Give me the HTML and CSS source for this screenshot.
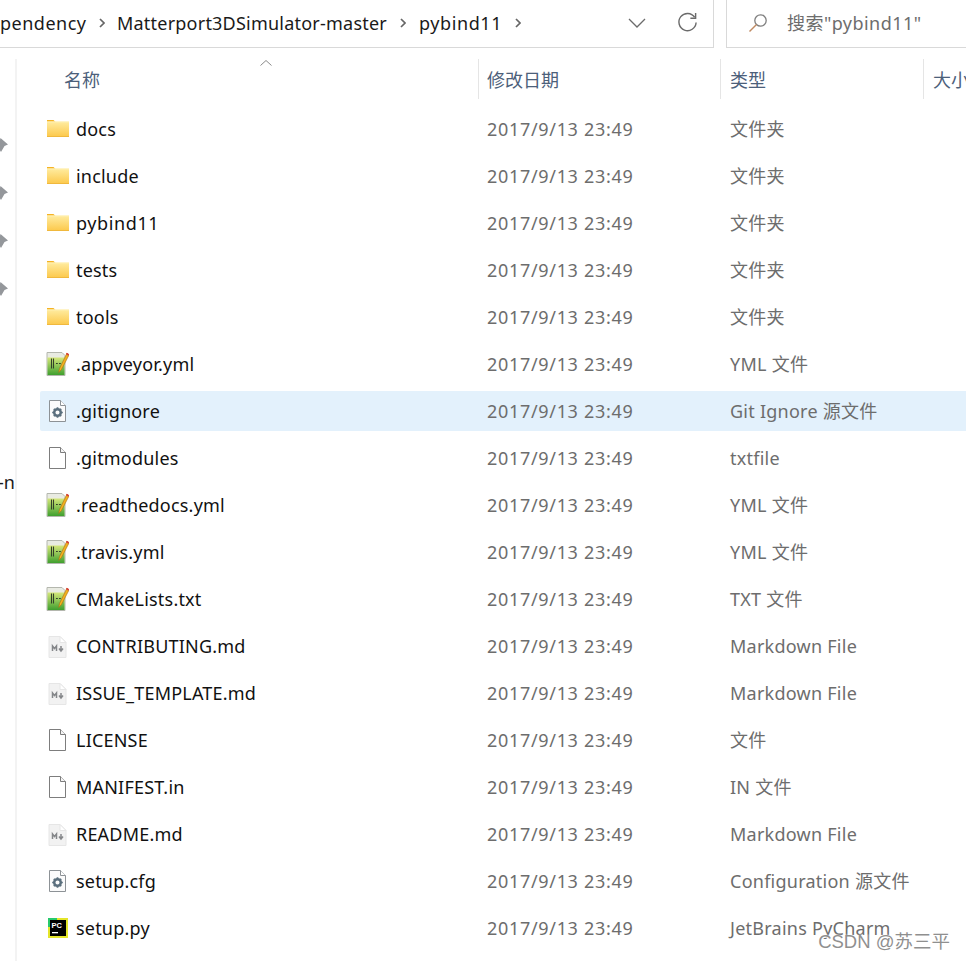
FILE: index.html
```html
<!DOCTYPE html>
<html lang="zh-CN">
<head>
<meta charset="utf-8">
<title>pybind11</title>
<link rel="stylesheet" href="styles.css">
</head>
<body>
<svg class="defs" width="0" height="0" aria-hidden="true">
  <defs>
    <linearGradient id="fg" x1="0" y1="0" x2="0" y2="1"><stop offset="0" stop-color="#ffeca0"/><stop offset="1" stop-color="#fcc84a"/></linearGradient>
    <linearGradient id="gg" x1="0" y1="0" x2="0" y2="1"><stop offset="0" stop-color="#d5e77a"/><stop offset="1" stop-color="#3f9f2e"/></linearGradient>
    <symbol id="folder" viewBox="0 0 24 24">
      <path d="M2 3h6.500l2 2h-8.500z" fill="#f5b324"/>
      <rect x="2" y="4.500" width="22" height="15.500" fill="url(#fg)"/>
      <path d="M2 4.500h22v.8h-22z" fill="#fff3c0"/>
      <path d="M2 19.400h22v.6h-22z" fill="#e8ae35"/>
    </symbol>
    <symbol id="yml" viewBox="0 0 24 24">
      <path d="M2 .5h15l3 3v20h-18z" fill="#e9ebe2" stroke="#b4b7ae"/>
      <rect x="2.500" y="5.500" width="17" height="17.500" fill="url(#gg)"/>
      <path d="M6.500 6.500v10M8.500 6.500v10M11 11.500h1.800M14 11.500h1.800" stroke="#33412a" stroke-width="1.100"/>
      <path d="M22 1 14.500 16.500l-.8 4 2.800-3L24 3z" fill="#f2b01e" stroke="#a66f1a" stroke-width=".6"/>
      <path d="M21.700 .8l2.500 1.400-.8 1.500-2.500-1.400z" fill="#d8433a"/>
    </symbol>
    <symbol id="gear" viewBox="0 0 24 24">
      <path d="M4.500 1.500h11l5 5v16h-16z" fill="#fbfbfb" stroke="#8d9296"/>
      <path d="M15.500 1.500v5h5" fill="#fff" stroke="#8d9296"/>
      <circle cx="12.500" cy="13.500" r="3.300" fill="none" stroke="#5b6f7d" stroke-width="2.500"/>
      <path d="M12.500 8.200v2M12.500 16.800v2M7.200 13.500h2M15.800 13.500h2M8.800 9.800l1.400 1.400M14.800 15.800l1.400 1.400M8.800 17.200l1.400-1.400M14.800 11.200l1.400-1.400" stroke="#5b6f7d" stroke-width="1.700"/>
    </symbol>
    <symbol id="blank" viewBox="0 0 24 24">
      <path d="M4.500 1.500h11l5 5v16h-16z" fill="#fff" stroke="#7d7d7d"/>
      <path d="M15.500 1.500v5h5" fill="#f4f4f4" stroke="#7d7d7d"/>
    </symbol>
    <symbol id="md" viewBox="0 0 24 24">
      <path d="M4 2.500h11l6 6v15h-17z" fill="#f2f2f2" stroke="#e6e6e6"/>
      <path d="M15 2.500v6h6z" fill="#fff" stroke="#e6e6e6"/>
      <path d="M7.500 17v-5l2 2.500 2-2.500v5M16 12v4.500M14 14.500l2 2.500 2-2.500" fill="none" stroke="#85878a" stroke-width="1.500"/>
    </symbol>
    <symbol id="pc" viewBox="0 0 24 24">
      <rect x="3" y="2" width="20" height="20" fill="#e4e52a"/>
      <rect x="3" y="2" width="9" height="9" fill="#27c96c"/>
      <rect x="5" y="4" width="16" height="16" fill="#000"/>
      <rect x="7" y="16" width="6" height="1.300" fill="#fff"/>
      <text x="6.500" y="11.500" class="pc-label">PC</text>
    </symbol>
    <symbol id="pin" viewBox="0 0 14 14">
      <path d="M6.500 0 14 6.500 10.500 8 7 14 4.500 10.500 1 14 0 13l3.500-3.500L0 7l5-2z" fill="#94979b"/>
    </symbol>
  </defs>
</svg>

<header class="toolbar">
  <div class="address">
    <nav class="crumbs">
      <span class="crumb crumb-first">pendency</span>
      <svg class="sep" viewBox="0 0 6 10"><path d="M1 1l4 4-4 4" fill="none" stroke="#666" stroke-width="1.700"/></svg>
      <span class="crumb crumb-long">Matterport3DSimulator-master</span>
      <svg class="sep" viewBox="0 0 6 10"><path d="M1 1l4 4-4 4" fill="none" stroke="#666" stroke-width="1.700"/></svg>
      <span class="crumb crumb-wide">pybind11</span>
      <svg class="sep" viewBox="0 0 6 10"><path d="M1 1l4 4-4 4" fill="none" stroke="#666" stroke-width="1.700"/></svg>
    </nav>
    <svg class="chev" viewBox="0 0 18 10"><path d="M1 1l8 8 8-8" fill="none" stroke="#6b6b6b" stroke-width="1.300"/></svg>
    <svg class="refresh" viewBox="0 0 22 22"><path d="M18.500 5.500A9 9 0 1 0 20 11" fill="none" stroke="#6b6b6b" stroke-width="1.500"/><path d="M19.500 1v5.500H14" fill="none" stroke="#6b6b6b" stroke-width="1.500"/></svg>
  </div>
  <div class="search">
    <svg class="glass" viewBox="0 0 20 20"><circle cx="12.500" cy="7.500" r="5.700" fill="none" stroke="#7f7f7f" stroke-width="1.300"/><path d="M8.500 11.500 1.500 18.500" stroke="#c08a62" stroke-width="1.400"/></svg>
    <span class="search-text">搜索"pybind11"</span>
  </div>
</header>

<div class="main">
  <aside class="side">
    <svg class="pin"><use href="#pin"/></svg>
    <svg class="pin"><use href="#pin"/></svg>
    <svg class="pin"><use href="#pin"/></svg>
    <svg class="pin"><use href="#pin"/></svg>
    <span class="side-label">-n</span>
  </aside>
  <section class="files">
    <svg class="sort" viewBox="0 0 12 6"><path d="M.5 5.500 6 .5l5.500 5" fill="none" stroke="#8a8a8a"/></svg>
    <div class="head">
      <div class="hcell hname">名称</div>
      <div class="hcell hdate">修改日期</div>
      <div class="hcell htype">类型</div>
      <div class="hcell hsize">大小</div>
    </div>
    <div class="list">
      <div class="row"><svg class="ico"><use href="#folder"/></svg><span class="name">docs</span><span class="date">2017/9/13 23:49</span><span class="type">文件夹</span></div>
      <div class="row"><svg class="ico"><use href="#folder"/></svg><span class="name">include</span><span class="date">2017/9/13 23:49</span><span class="type">文件夹</span></div>
      <div class="row"><svg class="ico"><use href="#folder"/></svg><span class="name name-wide">pybind11</span><span class="date">2017/9/13 23:49</span><span class="type">文件夹</span></div>
      <div class="row"><svg class="ico"><use href="#folder"/></svg><span class="name">tests</span><span class="date">2017/9/13 23:49</span><span class="type">文件夹</span></div>
      <div class="row"><svg class="ico"><use href="#folder"/></svg><span class="name">tools</span><span class="date">2017/9/13 23:49</span><span class="type">文件夹</span></div>
      <div class="row"><svg class="ico"><use href="#yml"/></svg><span class="name">.appveyor.yml</span><span class="date">2017/9/13 23:49</span><span class="type">YML 文件</span></div>
      <div class="row row-hover"><svg class="ico"><use href="#gear"/></svg><span class="name">.gitignore</span><span class="date">2017/9/13 23:49</span><span class="type">Git Ignore 源文件</span></div>
      <div class="row"><svg class="ico"><use href="#blank"/></svg><span class="name">.gitmodules</span><span class="date">2017/9/13 23:49</span><span class="type">txtfile</span></div>
      <div class="row"><svg class="ico"><use href="#yml"/></svg><span class="name">.readthedocs.yml</span><span class="date">2017/9/13 23:49</span><span class="type">YML 文件</span></div>
      <div class="row"><svg class="ico"><use href="#yml"/></svg><span class="name">.travis.yml</span><span class="date">2017/9/13 23:49</span><span class="type">YML 文件</span></div>
      <div class="row"><svg class="ico"><use href="#yml"/></svg><span class="name">CMakeLists.txt</span><span class="date">2017/9/13 23:49</span><span class="type">TXT 文件</span></div>
      <div class="row"><svg class="ico"><use href="#md"/></svg><span class="name">CONTRIBUTING.md</span><span class="date">2017/9/13 23:49</span><span class="type">Markdown File</span></div>
      <div class="row"><svg class="ico"><use href="#md"/></svg><span class="name">ISSUE_TEMPLATE.md</span><span class="date">2017/9/13 23:49</span><span class="type">Markdown File</span></div>
      <div class="row"><svg class="ico"><use href="#blank"/></svg><span class="name">LICENSE</span><span class="date">2017/9/13 23:49</span><span class="type">文件</span></div>
      <div class="row"><svg class="ico"><use href="#blank"/></svg><span class="name">MANIFEST.in</span><span class="date">2017/9/13 23:49</span><span class="type">IN 文件</span></div>
      <div class="row"><svg class="ico"><use href="#md"/></svg><span class="name">README.md</span><span class="date">2017/9/13 23:49</span><span class="type">Markdown File</span></div>
      <div class="row"><svg class="ico"><use href="#gear"/></svg><span class="name">setup.cfg</span><span class="date">2017/9/13 23:49</span><span class="type">Configuration 源文件</span></div>
      <div class="row"><svg class="ico"><use href="#pc"/></svg><span class="name">setup.py</span><span class="date">2017/9/13 23:49</span><span class="type">JetBrains PyCharm</span></div>
    </div>
  </section>
</div>
<div class="mark">CSDN @苏三平</div>
</body>
</html>
```

FILE: styles.css
```css
* { box-sizing: border-box; }
html, body { margin: 0; padding: 0; }
body {
  width: 966px;
  height: 961px;
  overflow: hidden;
  background: #fff;
  position: relative;
  font-family: "Noto Sans", "Noto Sans CJK SC", sans-serif;
  font-size: 18px;
  line-height: 24px;
  color: #000;
}
.defs { position: absolute; }
.pc-label { font: 700 7.500px "Liberation Sans", sans-serif; fill: #fff; }

.toolbar { display: flex; height: 48px; gap: 12px; }
.address {
  width: 714px;
  display: flex;
  align-items: center;
  border-right: 1px solid #d9d9d9;
  border-bottom: 1px solid #d9d9d9;
  padding-bottom: 2px;
}
.crumbs { display: flex; align-items: center; flex: 1; }
.crumb { white-space: nowrap; color: #1a1a1a; }
.crumb-first { width: 99px; letter-spacing: .5px; }
.crumb-long { letter-spacing: .22px; }
.crumb-wide { letter-spacing: .6px; }
.sep { width: 6px; height: 10px; margin: 0 13px; flex: none; }
.crumb-first + .sep { margin-left: 0; margin-right: 12px; }
.chev { width: 18px; height: 10px; margin-right: 31px; flex: none; }
.refresh { width: 21px; height: 21px; margin-right: 15px; flex: none; }
.search {
  flex: 1;
  display: flex;
  align-items: center;
  border-left: 1px solid #d9d9d9;
  border-bottom: 1px solid #d9d9d9;
  padding: 0 0 2px 21px;
}
.glass { width: 20px; height: 20px; margin-right: 19px; flex: none; }
.search-text { color: #6d6d6d; white-space: nowrap; letter-spacing: .45px; }

.main { display: flex; padding-top: 11px; }
.side {
  width: 17px;
  height: 902px;
  border-right: 2px solid #f3f3f3;
  display: flex;
  flex-direction: column;
  align-items: flex-start;
  padding-top: 79px;
  gap: 34px;
  flex: none;
}
.pin { width: 14px; height: 14px; margin-left: -6px; flex: none; }
.side-label { margin: 140px 0 0 -2px; color: #1a1a1a; white-space: nowrap; }

.files { position: relative; margin-left: 23px; width: 926px; flex: none; }
.sort { position: absolute; left: 220px; top: 1px; width: 12px; height: 6px; }
.head { display: grid; grid-template-columns: 438px 242px 203px 43px; height: 40px; overflow: hidden; }
.hcell { color: #4c607a; display: flex; align-items: center; padding: 1px 0 0 8px; border-left: 1px solid #e5e5e5; white-space: nowrap; }
.htype, .hsize { padding-left: 9px; }
.hname { border-left: 0; padding-left: 24px; }
.list { display: flex; flex-direction: column; gap: 7px; margin-top: 10px; }
.row {
  display: grid;
  grid-template-columns: 438px 243px 1fr;
  height: 40px;
  align-items: center;
  position: relative;
  white-space: nowrap;
  border-radius: 2px 0 0 2px;
}
.row-hover { background: #e3f1fc; }
.ico { position: absolute; left: 5px; top: 8px; width: 24px; height: 24px; }
.name { padding-left: 36px; color: #111; letter-spacing: .2px; }
.name-wide { letter-spacing: .6px; }
.date { padding-left: 9px; color: #6d6d6d; letter-spacing: .68px; }
.type { padding-left: 9px; color: #6d6d6d; letter-spacing: .25px; }
.mark {
  position: absolute;
  right: 16px;
  bottom: 7px;
  font-size: 18.500px;
  color: #8f8f8f;
  text-shadow: 0 0 2px #fff, 1px 1px 0 #fff;
  font-family: "Liberation Sans", "Noto Sans CJK SC", sans-serif;
}
```
